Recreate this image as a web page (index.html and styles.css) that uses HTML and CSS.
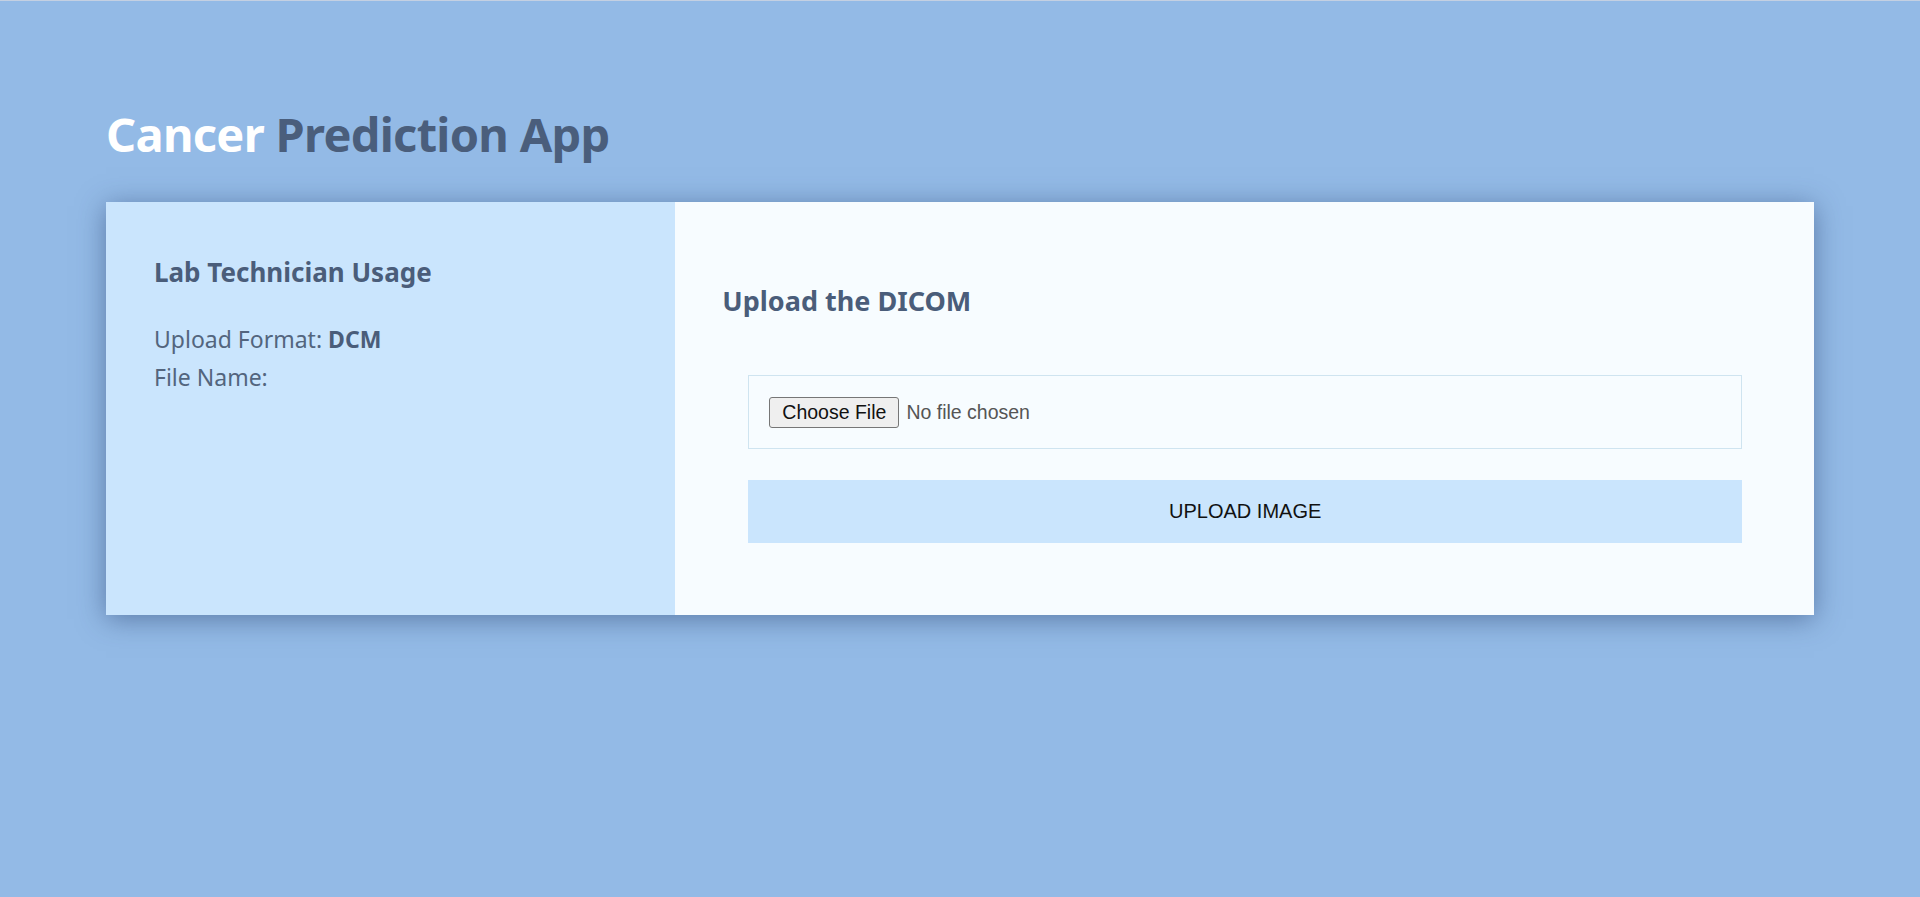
FILE: index.html
```html
<!DOCTYPE html>
<html lang="en">
<head>
<meta charset="utf-8">
<title>Cancer Prediction App</title>
<link rel="stylesheet" href="styles.css">
</head>
<body>
<div class="page">
  <h1 class="app-title"><span class="accent">Cancer</span> Prediction App</h1>
  <div class="card">
    <aside class="info-panel">
      <h3 class="panel-heading">Lab Technician Usage</h3>
      <p class="info-line">Upload Format: <strong>DCM</strong></p>
      <p class="info-line">File Name:</p>
    </aside>
    <section class="upload-panel">
      <h3 class="upload-heading">Upload the DICOM</h3>
      <form class="upload-form">
        <div class="file-box"><input type="file" class="file-input"></div>
        <button type="button" class="upload-btn">UPLOAD IMAGE</button>
      </form>
    </section>
  </div>
</div>
</body>
</html>
```

FILE: styles.css
```css
* { box-sizing: border-box; }

html, body {
  margin: 0;
  padding: 0;
}

body {
  min-height: 100vh;
  background: #93bae6;
  border-top: 1px solid #c4d0e2;
  font-family: "Noto Sans", "Open Sans", sans-serif;
  color: #4a5d7a;
}

.page {
  padding: 105px 106px 0;
}

.app-title {
  margin: 0 0 40px;
  font-size: 47px;
  line-height: 56px;
  letter-spacing: -0.7px;
  font-weight: 700;
  color: #4a5e7c;
}

.accent {
  color: #ffffff;
}

.card {
  display: grid;
  grid-template-columns: 1fr 2fr;
  box-shadow: 0 4px 26px rgba(35, 60, 105, 0.5);
}

.info-panel {
  background: #cae5fd;
  padding: 55px 48px 48px;
}

.panel-heading {
  margin: 0 0 32px;
  font-size: 26px;
  line-height: 1.2;
  font-weight: 700;
  color: #4a5d7a;
}

.info-line {
  margin: 0;
  font-size: 23px;
  line-height: 38px;
  color: #53657e;
}

.info-line strong {
  font-weight: 700;
  color: #4a5d7a;
}

.upload-panel {
  background: #f7fcff;
  padding: 83px 48px 72px 47px;
}

.upload-heading {
  margin: 0 0 58px;
  font-size: 27px;
  line-height: 1.2;
  font-weight: 700;
  color: #4a5d7a;
}

.upload-form {
  margin: 0 24px 0 26px;
  display: flex;
  flex-direction: column;
  gap: 31px;
}

.file-box {
  border: 1px solid #cfe4f0;
  padding: 21px 20px 20px;
}

.file-input {
  display: block;
  height: 31px;
  font-family: "Liberation Sans", Arial, sans-serif;
  font-size: 19.5px;
  color: #555;
}

.file-input::file-selector-button {
  font-family: "Liberation Sans", Arial, sans-serif;
  font-size: 19.5px;
  color: #111;
  height: 31px;
  padding: 0 12px;
  margin-right: 7px;
  background: #efefef;
  border: 1px solid #767676;
  border-radius: 3px;
}

.upload-btn {
  height: 63px;
  border: none;
  background: #cae5fd;
  font-family: "Liberation Sans", Arial, sans-serif;
  font-size: 20px;
  color: #111;
  cursor: pointer;
}
```
